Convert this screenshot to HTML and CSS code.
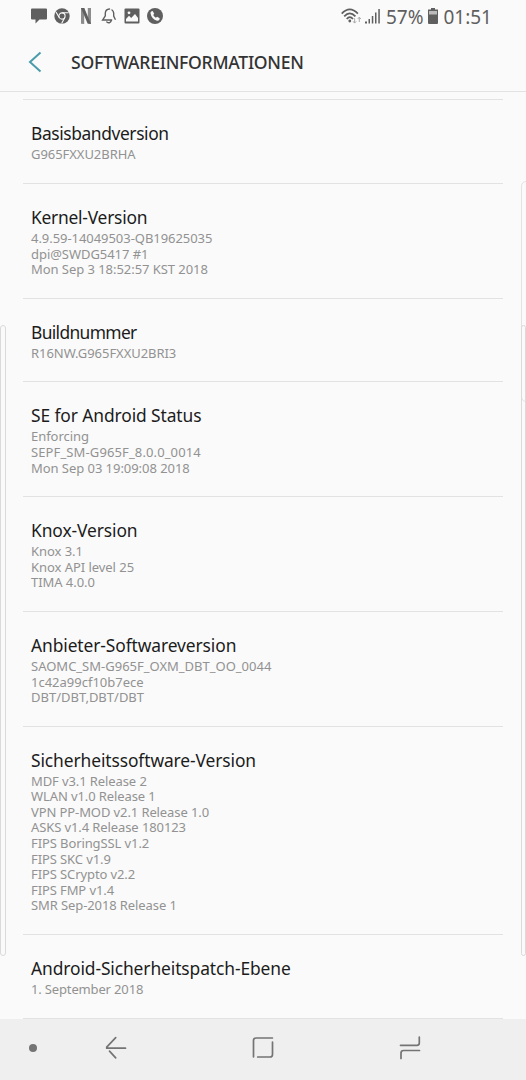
FILE: index.html
```html
<!DOCTYPE html>
<html lang="de">

<head>
    <meta charset="UTF-8" />
    <meta name="viewport" content="width=device-width, initial-scale=1.0" />
    <title>Softwareinformationen</title>
    <link rel="stylesheet" href="styles.css">
</head>

<body>
    <div class="statusbar">
        <div class="notifications">
            <svg width="16" height="16" viewBox="0 0 16 16"><path d="M1 .5h14q1 0 1 1v9q0 1-1 1H8.500l-4 4v-4H1q-1 0-1-1v-9q0-1 1-1z" fill="#5f5f5f" /></svg>
            <svg width="16" height="16" viewBox="0 0 16 16">
                <circle cx="8" cy="8" r="7.7" fill="#5f5f5f" />
                <circle cx="8" cy="8" r="3.1" fill="none" stroke="#fafafa" stroke-width="1.1" />
                <path d="M8 4.8h6.7M5.2 9.5L2 4M10.8 9.5L7.6 15.4" stroke="#fafafa" stroke-width="1.1" />
            </svg>
            <svg class="netflix" width="10" height="16" viewBox="0 0 10 16">
                <path d="M0 0h3.2v16L0 15.7zM6.8 0H10v16l-3.2-.5z" fill="#8c8c8c" />
                <path d="M0 0h3.3L10 16l-3.4-.4z" fill="#5f5f5f" />
            </svg>
            <svg class="bell" width="16" height="16" viewBox="0 0 16 16" fill="none" stroke="#5f5f5f" stroke-width="1.4" stroke-linecap="round">
                <path d="M14.200 11.200L12.700 8V5.200Q12.400 3 11 2M8.500 1Q4.600 1.200 4.300 5v2.800L1.600 12H10.600M5.800 14Q9 16.200 10.600 12" />
            </svg>
            <svg width="16" height="16" viewBox="0 0 16 16">
                <path d="M1.5.5h13q1 0 1 1v13q0 1-1 1h-13q-1 0-1-1v-13q0-1 1-1z" fill="#5f5f5f" />
                <path d="M2 13.5V11l3-3.2 2.2 2.3L11 6l3 4v3.5z" fill="#fafafa" />
                <circle cx="5" cy="4.8" r="1.4" fill="#fafafa" />
            </svg>
            <svg width="16" height="16" viewBox="0 0 16 16">
                <circle cx="8" cy="8" r="8" fill="#5f5f5f" />
                <path d="M4.2 3.4L5.7 3l1.5 2.8-1 1.2q.8 1.8 2.7 2.8l1.2-1.1 2.6 1.5-.3 1.5q-.8 1.3-2.3 1.1Q4.5 11.2 3.5 5.3 3.4 4.100 4.200 3.400z" fill="#fafafa" />
            </svg>
        </div>
        <div class="system">
            <svg class="wifi" width="21" height="17" viewBox="0 0 21 17">
                <g fill="none" stroke="#5f5f5f" stroke-width="1.7">
                    <path d="M.7 5.6Q8.700-3 16.900 5.600M3.200 8.400Q8.700 2.200 14.400 8.400M5.700 11Q8.800 7.400 12 11" />
                </g>
                <circle cx="8.8" cy="13" r="1.4" fill="#5f5f5f" />
                <path d="M13.600 10.300v4.700M12 13.300l1.600 1.800 1.600-1.800M18.300 14V9.300M16.700 11l1.600-1.800 1.600 1.800" fill="none" stroke="#aaa" />
            </svg>
            <svg class="signal" width="16" height="16" viewBox="0 0 16 16" fill="#5f5f5f">
                <path d="M0 13.500h2v2H0zM3.500 11h1.500v4.500H3.500zM6.800 8h1.500v7.500H6.800zM10 4.500h1.500v11H10zM13.300 1h1.500v14.500h-1.500z" />
            </svg>
            <span class="percent">57%</span>
            <svg class="battery" width="10" height="16" viewBox="0 0 10 16">
                <path d="M3 0h4v1.500h3V7H0V1.500h3z" fill="#5f5f5f" />
                <path d="M1 3h8v4H1z" fill="#bbb" />
                <path d="M0 6.500h10V15q0 1-1 1H1q-1 0-1-1z" fill="#5f5f5f" />
            </svg>
            <span class="clock">01:51</span>
        </div>
    </div>

    <header class="appbar">
        <svg class="back" width="14" height="22" viewBox="0 0 14 22"><path d="M12.500 1.500L2 11l10.500 9.500" fill="none" stroke="#4b9cab" stroke-width="2" /></svg>
        <h1>SOFTWAREINFORMATIONEN</h1>
    </header>

    <main class="list">
        <section class="item basisband">
            <h2>Basisbandversion</h2>
            <p>G965FXXU2BRHA</p>
        </section>
        <section class="item kernel">
            <h2>Kernel-Version</h2>
            <p>4.9.59-14049503-QB19625035<br>
                dpi@SWDG5417 #1<br>
                Mon Sep 3 18:52:57 KST 2018</p>
        </section>
        <section class="item build">
            <h2>Buildnummer</h2>
            <p>R16NW.G965FXXU2BRI3</p>
        </section>
        <section class="item se-android">
            <h2>SE for Android Status</h2>
            <p>Enforcing<br>
                <span class="sepf">SEPF_SM-G965F_8.0.0_0014</span><br>
                Mon Sep 03 19:09:08 2018</p>
        </section>
        <section class="item knox">
            <h2>Knox-Version</h2>
            <p>Knox 3.1<br>
                Knox API level 25<br>
                TIMA 4.0.0</p>
        </section>
        <section class="item anbieter">
            <h2>Anbieter-Softwareversion</h2>
            <p>SAOMC_SM-G965F_OXM_DBT_OO_0044<br>
                1c42a99cf10b7ece<br>
                DBT/DBT,DBT/DBT</p>
        </section>
        <section class="item sicherheit">
            <h2>Sicherheitssoftware-Version</h2>
            <p>MDF v3.1 Release 2<br>
                WLAN v1.0 Release 1<br>
                VPN PP-MOD v2.1 Release 1.0<br>
                ASKS v1.4 Release 180123<br>
                FIPS BoringSSL v1.2<br>
                FIPS SKC v1.9<br>
                FIPS SCrypto v2.2<br>
                FIPS FMP v1.4<br>
                SMR Sep-2018 Release 1</p>
        </section>
        <section class="item patch">
            <h2>Android-Sicherheitspatch-Ebene</h2>
            <p>1. September 2018</p>
        </section>
    </main>

    <nav class="navbar">
        <span class="dot"></span>
        <svg class="nav-back" width="22" height="24" viewBox="0 0 22 24"><path d="M10.700 1.700L1.700 11.200v1H20.500M4.500 15.200l6.200 6.600" /></svg>
        <svg class="nav-home" width="22" height="24" viewBox="0 0 22 24"><path d="M1.500 20.800V4.500q0-2.500 2.500-2.500H20.400M20.500 6.200V18.500q0 2.500-2.500 2.500H5.700" /></svg>
        <svg class="nav-recent" width="22" height="24" viewBox="0 0 22 24"><path d="M20.300 1v6q0 2.300-2.300 2.300H1.500M2 22.500V17q0-2.500 2.500-2.500H20.500" /></svg>
    </nav>

    <!-- edge handles lying over the list -->
    <span class="edge edge-left"></span>
    <span class="edge edge-panel"></span>
    <span class="edge edge-right"></span>

</body>

</html>
```
FILE: styles.css
```css
:root {
    --bg: #fafafa;
    --line: #e2e2e2;
    --icon: #5f5f5f;
    --text: #1c1c1c;
    --muted: #929292;
}

* {
    box-sizing: border-box;
}

body {
    position: relative;
    width: 526px;
    height: 1080px;
    margin: 0;
    overflow: hidden;
    display: flex;
    flex-direction: column;
    background: var(--bg);
    color: var(--text);
    font-family: "Noto Sans", sans-serif;
}

h1,
h2,
p {
    margin: 0;
    font-weight: normal;
    white-space: nowrap;
}

svg {
    display: block;
    flex: none;
}

.statusbar {
    height: 33px;
    padding: 0 34px 1px 31px;
    display: flex;
    justify-content: space-between;
    align-items: center;
    color: var(--icon);
}

.notifications {
    display: flex;
    align-items: center;
    gap: 7.3px;
}

.netflix {
    margin-left: 3px;
}

.bell {
    margin-left: 3px;
}

.system {
    display: flex;
    align-items: center;
    font-size: 19px;
    line-height: 32px;
}

.percent,
.clock {
    padding-top: 1px;
}

.signal {
    margin: 0 5px 0 3px;
}

.battery {
    margin: 0 5px;
}

.appbar {
    height: 59px;
    padding: 0 28px 1px;
    display: flex;
    align-items: center;
    border-bottom: 1px solid var(--line);
}

.appbar h1 {
    margin-left: 29px;
    font-size: 17.6px;
    font-weight: 500;
    letter-spacing: -0.28px;
    color: #333;
}

.list {
    height: 927px;
    padding: 7.4px 23px 0;
    overflow: hidden;
}

.item {
    padding: 21px 8px 20px;
    border-top: 1px solid var(--line);
}

.item:last-child {
    border-bottom: 1px solid var(--line);
}

.item h2 {
    margin-bottom: 1px;
    font-size: 17.4px;
    line-height: 25px;
    letter-spacing: -0.1px;
}

.item p {
    font-size: 13px;
    line-height: 15.6px;
    letter-spacing: -0.05px;
    color: var(--muted);
}

.basisband h2 {
    letter-spacing: -0.4px;
}

.kernel h2 {
    letter-spacing: -0.24px;
}

.build h2 {
    letter-spacing: -0.65px;
}

.sepf {
    letter-spacing: 0.12px;
}

.anbieter p {
    letter-spacing: 0;
}

.sicherheit p {
    letter-spacing: -0.1px;
}

.patch p {
    letter-spacing: -0.15px;
}

.navbar {
    height: 61px;
    padding: 0 0 3px 29px;
    display: flex;
    align-items: center;
    background: #efefef;
}

.navbar path {
    fill: none;
    stroke: #747474;
    stroke-width: 1.7;
    stroke-linecap: round;
    stroke-linejoin: round;
}

.nav-back {
    margin-left: 68px;
}

.nav-home,
.nav-recent {
    margin-left: 125px;
}

.dot {
    width: 8px;
    height: 8px;
    border-radius: 50%;
    background: #747474;
}

.edge {
    position: absolute;
    border: 1px solid #dadada;
}

.edge-left {
    top: 325px;
    left: 0;
    width: 6px;
    height: 631px;
    border-radius: 3px;
}

.edge-panel {
    top: 181px;
    left: 521px;
    width: 12px;
    height: 221px;
    border-color: #e3e3e3;
    border-radius: 5px;
}

.edge-right {
    top: 325px;
    left: 521px;
    width: 5px;
    height: 631px;
    border-radius: 3px;
}
```
